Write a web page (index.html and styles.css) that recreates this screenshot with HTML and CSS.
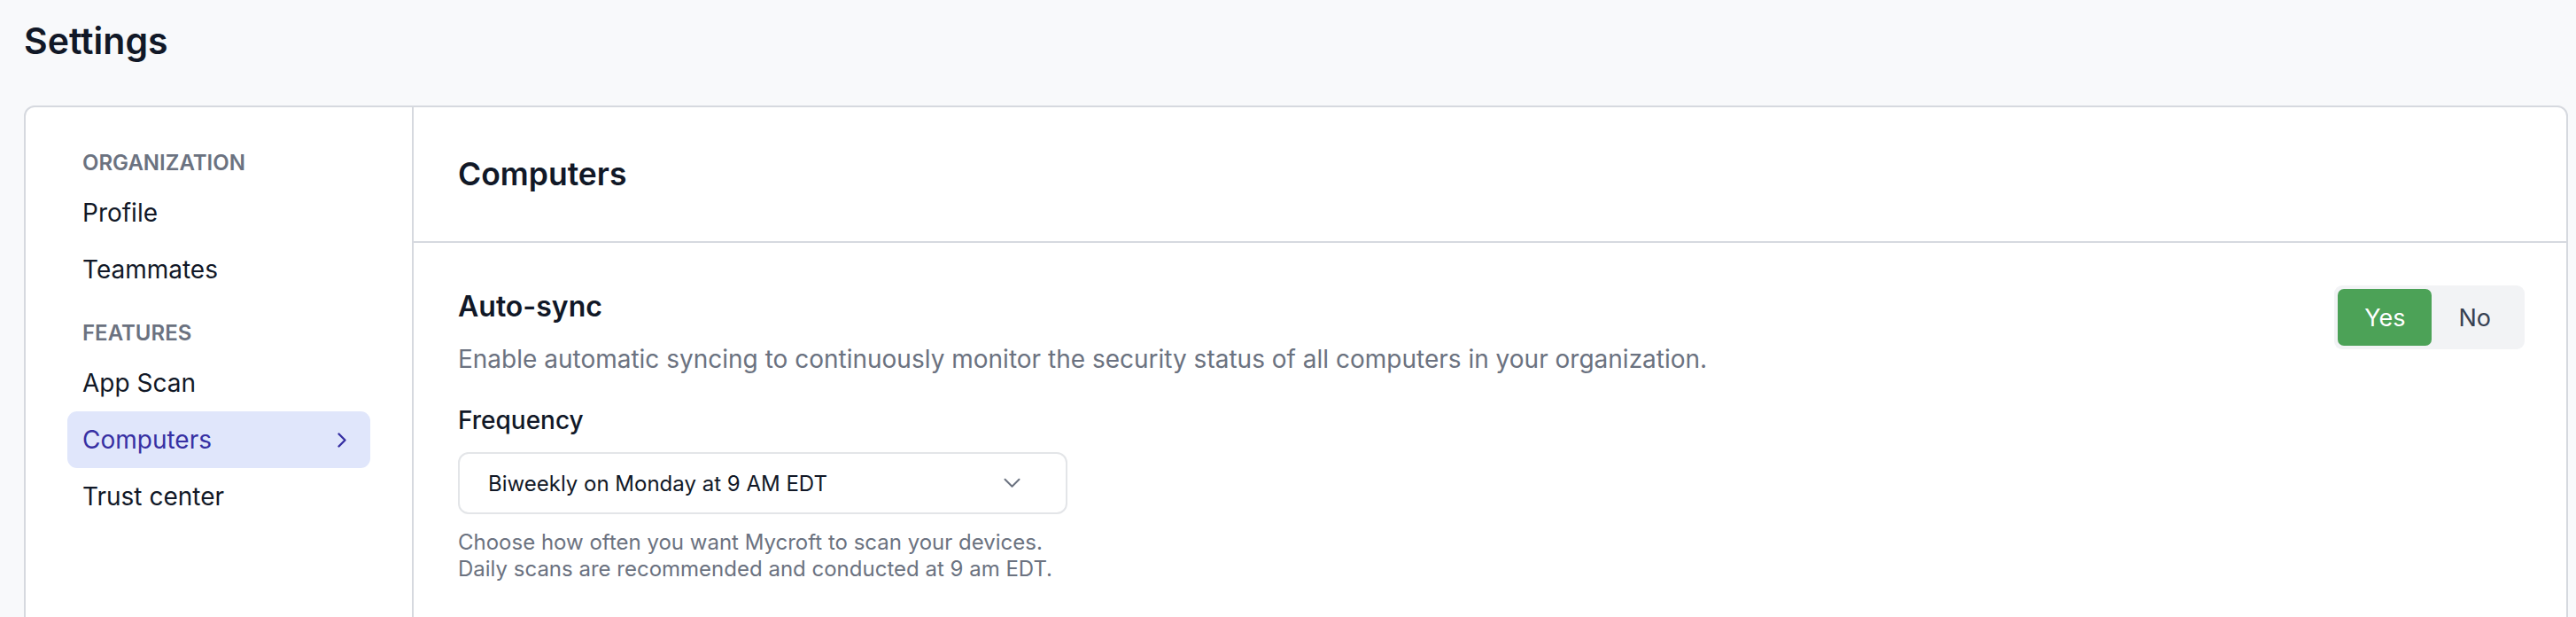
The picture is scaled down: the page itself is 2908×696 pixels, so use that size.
FILE: index.html
```html
<!DOCTYPE html>
<html lang="en">
<head>
<meta charset="utf-8">
<title>Settings</title>
<link rel="stylesheet" href="styles.css">
</head>
<body>
<div class="page">
  <h1 class="page-title">Settings</h1>
  <div class="card">
    <aside class="sidebar">
      <div class="nav-label">ORGANIZATION</div>
      <a class="nav-item">Profile</a>
      <a class="nav-item">Teammates</a>
      <div class="nav-label nav-label-gap">FEATURES</div>
      <a class="nav-item">App Scan</a>
      <a class="nav-item active">Computers
        <svg class="nav-chevron" width="12" height="19" viewBox="0 0 12 19" fill="none"><path d="M2.5 2.5 L9.5 9.5 L2.5 16.5" stroke="currentColor" stroke-width="2.4" stroke-linecap="round" stroke-linejoin="round"/></svg>
      </a>
      <a class="nav-item">Trust center</a>
    </aside>
    <main class="content">
      <header class="content-header">
        <h2 class="content-title">Computers</h2>
      </header>
      <section class="setting">
        <div class="setting-body">
          <h3 class="setting-title">Auto-sync</h3>
          <p class="setting-desc">Enable automatic syncing to continuously monitor the security status of all computers in your organization.</p>
          <div class="field-label">Frequency</div>
          <div class="select">
            <span class="select-value">Biweekly on Monday at 9 AM EDT</span>
            <svg class="select-chevron" width="19" height="12" viewBox="0 0 19 12" fill="none"><path d="M1.5 1.8 L9.5 9.8 L17.5 1.8" stroke="currentColor" stroke-width="2" stroke-linecap="round" stroke-linejoin="round"/></svg>
          </div>
          <p class="field-help">Choose how often you want Mycroft to scan your devices.<br>Daily scans are recommended and conducted at 9 am EDT.</p>
        </div>
        <div class="toggle">
          <button class="toggle-btn on">Yes</button>
          <button class="toggle-btn off">No</button>
        </div>
      </section>
    </main>
  </div>
</div>
</body>
</html>
```
FILE: styles.css
```css
* { box-sizing: border-box; }
html, body { margin: 0; padding: 0; }
body {
  background: #f8f9fb;
  font-family: Inter, "Noto Sans", sans-serif;
  color: #111827;
  height: 696px;
  overflow: hidden;
}
.page {
  padding: 21px 9px 0 27px;
}
.page-title {
  margin: 0 0 48px 0;
  font-size: 41px;
  line-height: 50px;
  font-weight: 600;
  color: #111827;
}
.card {
  display: flex;
  background: #fff;
  border: 2px solid #d6d9df;
  border-radius: 12px;
  min-height: 640px;
}
.sidebar {
  width: 438px;
  flex: none;
  border-right: 2px solid #d6d9df;
  padding: 49px 0 0 47px;
  display: flex;
  flex-direction: column;
}
.nav-label {
  font-size: 24px;
  line-height: 28px;
  font-weight: 600;
  color: #6b7280;
  padding-left: 17px;
  margin-bottom: 10px;
}
.nav-label-gap { margin-top: 26px; }
.nav-item {
  display: flex;
  align-items: center;
  justify-content: space-between;
  width: 342px;
  height: 64px;
  padding: 0 26px 0 17px;
  font-size: 28px;
  line-height: 64px;
  color: #111827;
  border-radius: 11px;
  text-decoration: none;
}
.nav-item.active {
  background: #e0e6fb;
  color: #3730a3;
}
.nav-chevron { display: block; }
.content {
  flex: 1;
  display: flex;
  flex-direction: column;
}
.content-header {
  height: 153px;
  border-bottom: 2px solid #d6d9df;
  padding-left: 50px;
  display: flex;
  align-items: center;
}
.content-title {
  margin: 0;
  font-size: 35.5px;
  font-weight: 600;
  line-height: 40px;
  color: #111827;
}
.setting {
  display: flex;
  justify-content: space-between;
  align-items: flex-start;
  padding: 48px 47px 0 50px;
}
.setting-title {
  margin: 0;
  font-size: 32px;
  line-height: 48px;
  font-weight: 600;
  color: #111827;
}
.setting-desc {
  margin: 15px 0 0 0;
  font-size: 28px;
  line-height: 40px;
  color: #6b7280;
}
.field-label {
  margin-top: 29px;
  font-size: 28px;
  line-height: 40px;
  font-weight: 500;
  color: #111827;
}
.select {
  margin-top: 16px;
  width: 688px;
  height: 70px;
  border: 2px solid #e3e5e8;
  border-radius: 12px;
  display: flex;
  align-items: center;
  justify-content: space-between;
  padding: 0 51px 0 32px;
}
.select-value {
  font-size: 24px;
  color: #111827;
}
.select-chevron { display: block; color: #6b7280; }
.field-help {
  margin: 17px 0 0 0;
  font-size: 24px;
  line-height: 30px;
  color: #6b7280;
}
.toggle {
  display: flex;
  background: #f2f3f5;
  border-radius: 9px;
  padding: 4px;
  flex: none;
}
.toggle-btn {
  height: 64px;
  padding: 0 30px;
  border: none;
  background: transparent;
  font-family: Inter, "Noto Sans", sans-serif;
  font-size: 27px;
  color: #374151;
  border-radius: 7px;
}
.toggle-btn.off {
  padding: 0 34px 0 30px;
}
.toggle-btn.on {
  background: #4ca257;
  color: #fff;
}
```
